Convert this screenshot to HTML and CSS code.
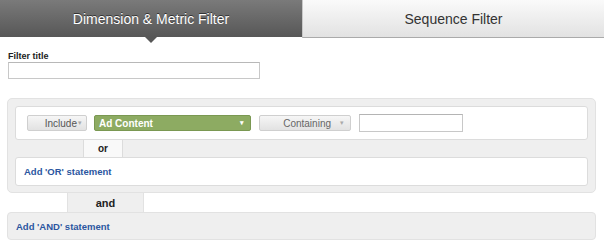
FILE: index.html
```html
<!DOCTYPE html>
<html>
<head>
<meta charset="utf-8">
<link rel="stylesheet" href="styles.css">
</head>
<body>
<div class="tabs">
  <div class="tab tab-active">Dimension &amp; Metric Filter</div>
  <div class="tab tab-idle">Sequence Filter</div>
</div>
<div class="content">
  <div class="field-label">Filter title</div>
  <input class="title-input" type="text">
  <div class="group">
    <div class="clause">
      <div class="btn btn-include">Include<span class="caret">▾</span></div>
      <div class="btn btn-dim">Ad Content<span class="caret caret-white">▾</span></div>
      <div class="btn btn-match">Containing<span class="caret">▾</span></div>
      <input class="value-input" type="text">
    </div>
    <div class="or-row">
      <div class="or-spacer"></div>
      <div class="or-cell">or</div>
      <div class="or-rest"></div>
    </div>
    <div class="clause clause-add">
      <span class="add-link">Add 'OR' statement</span>
    </div>
  </div>
  <div class="and-row">
    <div class="and-cell">and</div>
  </div>
  <div class="and-box">
    <span class="add-link">Add 'AND' statement</span>
  </div>
</div>
</body>
</html>
```
FILE: styles.css
```css
* { box-sizing: border-box; }
body {
  margin: 0;
  font-family: "Liberation Sans", Arial, sans-serif;
  background: #fff;
}
.tabs {
  display: flex;
  height: 38px;
}
.tab {
  width: 302px;
  display: flex;
  align-items: center;
  justify-content: center;
  font-size: 14px;
}
.tab-active {
  position: relative;
  color: #fff;
  background: linear-gradient(#7a7a7a, #575757);
  text-shadow: 0 -1px 0 #333;
  height: 37px;
}
.tab-active::after {
  content: "";
  position: absolute;
  left: 145px;
  top: 37px;
  border-left: 6px solid transparent;
  border-right: 6px solid transparent;
  border-top: 6px solid #575757;
}
.tab-idle {
  color: #333;
  background: linear-gradient(#fafafa, #e2e2e2);
  border-left: 1px solid #c8c8c8;
  border-bottom: 1px solid #aaa;
  width: 302px;
}
.content {
  padding: 0 8px 0 7px;
}
.field-label {
  margin-top: 13px;
  margin-left: 1px;
  font-size: 9px;
  font-weight: bold;
  color: #222;
  height: 11px;
  line-height: 11px;
}
.title-input {
  display: block;
  margin: 0 0 0 1px;
  width: 252px;
  height: 17px;
  border: 1px solid #c8c8c8;
  border-top-color: #b8b8b8;
  padding: 0;
}
.group {
  margin-top: 19px;
  width: 589px;
  background: #efefef;
  border: 1px solid #e2e2e2;
  border-radius: 5px;
  padding: 7px 7px 6px 7px;
}
.clause {
  height: 34px;
  background: #fff;
  border: 1px solid #dcdcdc;
  border-radius: 3px;
  display: flex;
  align-items: center;
  padding-left: 11px;
}
.btn {
  height: 16px;
  display: flex;
  align-items: center;
  font-size: 10px;
  border-radius: 2px;
  position: relative;
}
.btn-include {
  width: 60px;
  justify-content: flex-end;
  padding-right: 4px;
  color: #555;
  background: linear-gradient(#f6f6f6, #e2e2e2);
  border: 1px solid #cfcfcf;
}
.btn-dim {
  margin-left: 7px;
  width: 157px;
  padding-left: 4px;
  color: #fff;
  font-weight: bold;
  background: #8dab62;
  border: 1px solid #7a9852;
}
.btn-match {
  margin-left: 8px;
  width: 92px;
  justify-content: flex-end;
  padding-right: 6px;
  color: #666;
  background: linear-gradient(#f6f6f6, #e2e2e2);
  border: 1px solid #cfcfcf;
}
.caret {
  font-size: 7px;
  color: #aaa;
  margin-left: 1px;
}
.btn-match .caret { margin-left: 9px; }
.caret-white {
  color: #fff;
  position: absolute;
  right: 6px;
}
.value-input {
  margin-left: 8px;
  width: 104px;
  height: 18px;
  border: 1px solid #c8c8c8;
  border-top-color: #b4b4b4;
  padding: 0;
}
.or-row {
  display: flex;
  height: 17px;
}
.or-spacer {
  width: 68px;
}
.or-cell {
  width: 40px;
  background: #f9f9f9;
  border-left: 1px solid #dcdcdc;
  border-right: 1px solid #dcdcdc;
  font-size: 10px;
  font-weight: bold;
  color: #222;
  display: flex;
  align-items: center;
  justify-content: center;
}
.or-rest { flex: 1; }
.clause-add {
  height: 29px;
  padding-left: 8px;
}
.add-link {
  font-size: 9.5px;
  font-weight: bold;
  color: #2b56a0;
}
.and-row {
  height: 19px;
  display: flex;
}
.and-cell {
  margin-left: 60px;
  width: 77px;
  background: #efefef;
  border-left: 1px solid #e2e2e2;
  border-right: 1px solid #e2e2e2;
  font-size: 11px;
  font-weight: bold;
  color: #222;
  display: flex;
  align-items: center;
  justify-content: center;
}
.and-box {
  width: 589px;
  height: 28px;
  background: #efefef;
  border: 1px solid #e2e2e2;
  border-radius: 4px;
  display: flex;
  align-items: center;
  padding-left: 8px;
}
```
